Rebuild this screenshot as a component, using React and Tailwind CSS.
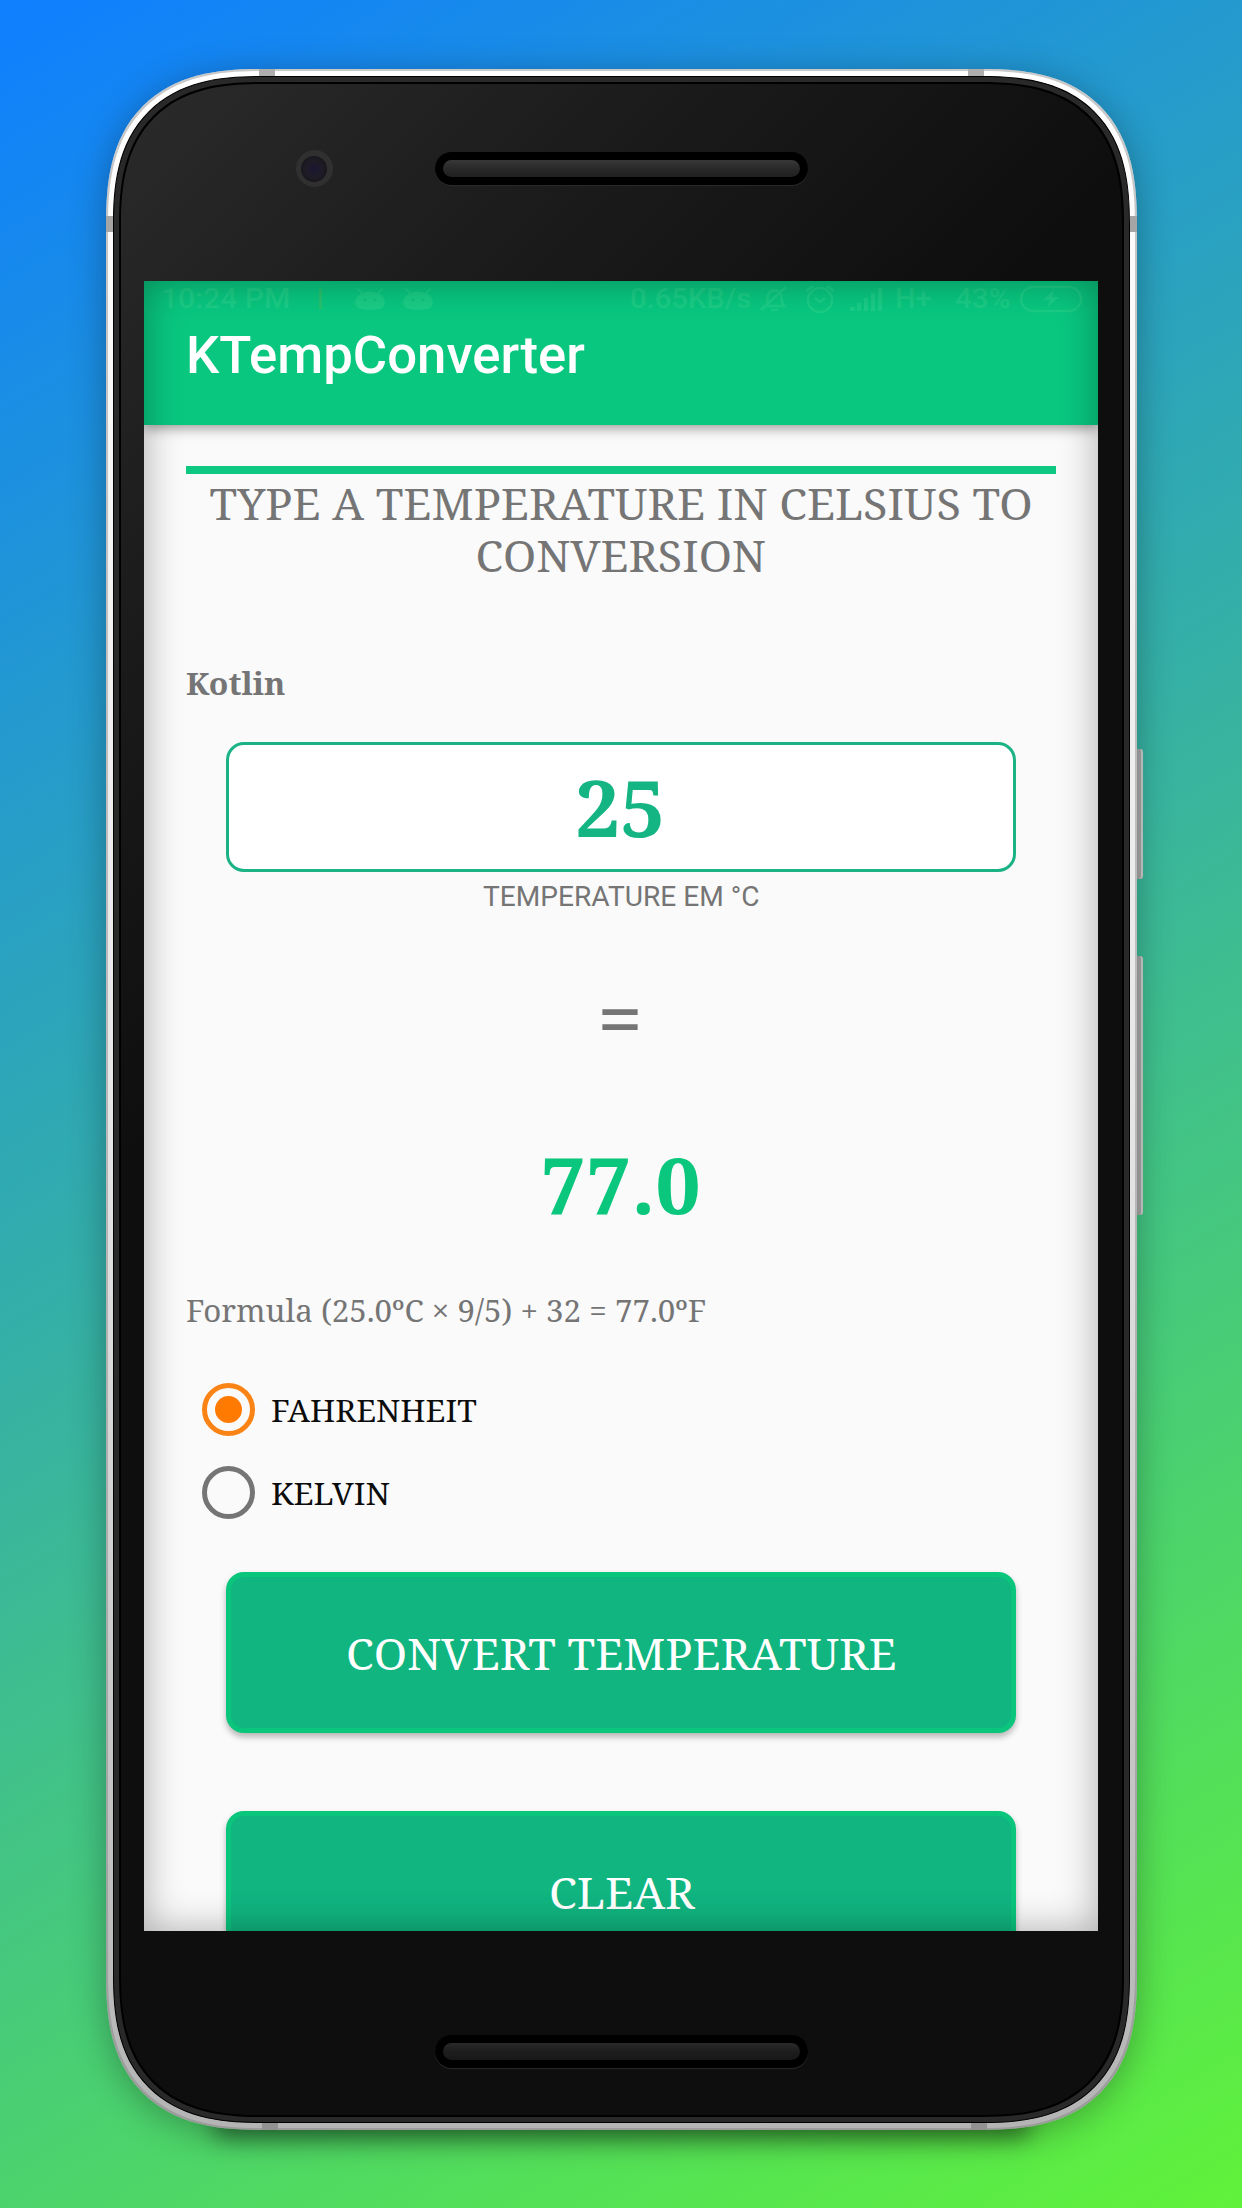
import { useLayoutEffect, useRef, useState } from "react";

const serif = "font-['Noto_Serif','DejaVu_Serif_Condensed','DejaVu_Serif',serif] [font-stretch:condensed]";
const sans = "font-[Roboto,sans-serif]";

/* One line of text squeezed or stretched to a given width. */
function FitText({ width, origin = "center", className = "", children }) {
  const ref = useRef(null);
  const [scale, setScale] = useState(1);
  useLayoutEffect(() => {
    const natural = ref.current.offsetWidth;
    if (natural) setScale(width / natural);
  }, [width, children]);
  return (
    <span
      ref={ref}
      className={`inline-block whitespace-nowrap ${className}`}
      style={{ transform: `scaleX(${scale})`, transformOrigin: origin }}
    >
      {children}
    </span>
  );
}

function Speaker({ light }) {
  return (
    <div className="flex h-[33px] w-[373px] items-center rounded-full bg-black px-2 shadow-[0_1px_1px_#2b2b2b]">
      <div
        className={
          light
            ? "h-[17px] w-full rounded-full bg-linear-to-b from-[#383838] via-[#292929] to-[#202020]"
            : "h-[17px] w-full rounded-full bg-linear-to-b from-[#2a2a2a] via-[#1d1d1d] to-[#181818]"
        }
      />
    </div>
  );
}

function Android() {
  return (
    <svg width="34" height="24" viewBox="0 0 34 24" fill="currentColor">
      <path d="M5 1l5 5c4-2 10-2 14 0l5-5 1 1-4 5c4 2 6 5 6 9 0 5-5 7-15 7S2 21 2 16c0-4 2-7 6-9L4 2z" />
      <circle cx="12" cy="13" r="1.5" fill="#10c37e" />
      <circle cx="22" cy="13" r="1.5" fill="#10c37e" />
    </svg>
  );
}

function StatusBar() {
  return (
    <div className={`flex h-[36px] items-center pl-[17px] pr-[15px] text-[28px] font-medium leading-[36px] text-[#1fcf88] opacity-80 ${sans}`}>
      <div className="flex w-[129px] justify-start"><FitText width={129} origin="left">10:24 PM</FitText></div>
      <div className="ml-[29px] h-[20px] w-[3px] bg-[#2fc26a]" />
      <div className="ml-[31px] flex gap-[14px]"><Android /><Android /></div>
      <div className="ml-auto flex items-center">
        <div className="w-[121px]"><FitText width={121} origin="left">0.65KB/s</FitText></div>
        <svg className="ml-[7px]" width="32" height="28" viewBox="0 0 32 28" fill="none" stroke="currentColor" strokeWidth="2.5">
          <path d="M5 21h23M8 21c2-3 1-8 2-11 2-6 11-6 13 0 1 4 0 8 3 11M13 25h7M3 25L28 2" />
        </svg>
        <svg className="ml-[14px]" width="32" height="30" viewBox="0 0 32 30" fill="none" stroke="currentColor" strokeWidth="2.5">
          <circle cx="16" cy="16" r="12" />
          <path d="M11 14l5 4 5-4M2 7l7-5M30 7l-7-5" />
        </svg>
        <svg className="ml-[14px]" width="34" height="24" viewBox="0 0 34 24" fill="currentColor">
          <path d="M0 20h5v4H0zM7 16h4v8H7zM14 11h4v13h-4zM21 6h4v18h-4zM28 1h4v23h-4z" />
        </svg>
        <div className="ml-[11px] w-[36px]"><FitText width={36} origin="left">H+</FitText></div>
        <div className="ml-[24px] w-[55px]"><FitText width={55} origin="left">43%</FitText></div>
        <svg className="ml-[9px]" width="64" height="28" viewBox="0 0 64 28" fill="none" stroke="currentColor" strokeWidth="2.5">
          <rect x="2" y="2" width="60" height="24" rx="12" />
          <path d="M35 5l-11 10h7l-3 8 12-11h-7z" fill="currentColor" stroke="none" />
        </svg>
      </div>
    </div>
  );
}

function Radio({ checked, label, width }) {
  return (
    <div className="flex h-[54px] items-center pl-4">
      <div
        className={`flex size-[53px] shrink-0 items-center justify-center rounded-full border-[5px] ${
          checked ? "border-[#f98415]" : "border-[#757575]"
        }`}
      >
        {checked && <div className="size-[27px] rounded-full bg-[#ff7a00]" />}
      </div>
      <div className={`ml-4 pt-1 text-[30px] leading-[50px] text-[#0c0c0c] ${serif}`}>
        <FitText width={width} origin="left">{label}</FitText>
      </div>
    </div>
  );
}

function ActionButton({ width, children }) {
  return (
    <button
      className={`mx-auto block h-[161px] w-[790px] shrink-0 rounded-[18px] border-[5px] border-[#0ac67d] bg-[#10b580] text-center text-[44px] leading-[152px] text-white shadow-[0_4px_6px_rgba(0,0,0,0.28)] ${serif}`}
    >
      <FitText width={width} className="pl-px">{children}</FitText>
    </button>
  );
}

function Screen() {
  return (
    <div className="relative flex h-[1650px] w-[954px] flex-col overflow-hidden bg-[#fafafa]">
      <header className="z-10 h-[144px] shrink-0 bg-[#09c77f] shadow-[0_3px_12px_rgba(0,0,0,0.4)]">
        <StatusBar />
        <div className={`pl-[42px] text-[51px] font-medium leading-[78px] text-white ${sans}`}>
          <FitText width={399} origin="left">KTempConverter</FitText>
        </div>
      </header>
      <main className="flex flex-col px-[42px] pt-[41px] text-[#757575]">
        <div className="h-2 shrink-0 bg-[#0cc880]" />
        <h1 className={`mt-1 flex flex-col items-center text-[44px] leading-[51.5px] ${serif}`}>
          <FitText width={824} className="pl-px">TYPE A TEMPERATURE IN CELSIUS TO</FitText>
          <FitText width={291}>CONVERSION</FitText>
        </h1>
        <div className={`mt-[82px] h-10 text-[31px] font-bold leading-10 ${serif}`}>
          <FitText width={99} origin="left">Kotlin</FitText>
        </div>
        <div className={`mx-auto mt-[39px] h-[130px] w-[790px] rounded-[18px] border-[3px] border-[#1bb385] bg-white pr-0.5 text-center text-[78px] font-bold leading-[124px] text-[#14b583] ${serif}`}>
          <FitText width={90}>25</FitText>
        </div>
        <div className={`mt-[9px] h-8 text-center text-[27.5px] leading-8 ${sans}`}>
          <FitText width={276}>TEMPERATURE EM °C</FitText>
        </div>
        <div className={`mt-[77px] h-[60px] pr-0.5 text-center text-[72px] leading-[60px] ${sans}`}>
          <FitText width={48}>=</FitText>
        </div>
        <div className={`mt-[89px] h-[90px] text-center text-[78px] font-bold leading-[90px] text-[#0bc77d] ${serif}`}>
          <FitText width={160}>77.0</FitText>
        </div>
        <div className={`mt-[61px] h-10 text-[31px] leading-10 ${serif}`}>
          <FitText width={520} origin="left">Formula (25.0ºC × 9/5) + 32 = 77.0ºF</FitText>
        </div>
        <div className="mt-[52px] flex flex-col gap-[29px]">
          <Radio checked label="FAHRENHEIT" width={206} />
          <Radio label="KELVIN" width={119} />
        </div>
        <div className="mt-[53px] flex flex-col gap-[78px]">
          <ActionButton width={551}>CONVERT TEMPERATURE</ActionButton>
          <ActionButton width={147}>CLEAR</ActionButton>
        </div>
      </main>
      <div className="pointer-events-none absolute inset-0 z-20 shadow-[inset_0_0_38px_rgba(0,0,0,0.32)]" />
    </div>
  );
}

export default function App() {
  return (
    <div className="flex h-[2208px] w-[1242px] justify-center overflow-hidden bg-[linear-gradient(149.5deg,#0f7fff_0%,#38b49f_50%,#60f23a_100%)] pt-[69px]">
      <div className="relative h-[2061px] w-[1031px]">
        <div className="absolute inset-x-[110px] bottom-[2px] h-[20px] rounded-full shadow-[0_6px_22px_4px_rgba(0,0,0,0.45)]" />
        <div className="absolute right-[-6px] top-[680px] h-[130px] w-3 rounded-[3px] border-r-2 border-[#cfcfcf] bg-[#a9a9a9]" />
        <div className="absolute right-[-6px] top-[887px] h-[259px] w-3 rounded-[3px] border-r-2 border-[#cfcfcf] bg-[#a9a9a9]" />
        <div className="relative h-full rounded-t-[127px] rounded-b-[132px] bg-linear-to-b from-white via-[#e6e6e6] to-[#b4b4b4] p-[7px] shadow-[inset_0_0_0_2px_rgba(120,120,120,0.4),0_6px_36px_rgba(0,0,0,0.3)] supports-[corner-shape:squircle]:rounded-[155px] supports-[corner-shape:squircle]:[corner-shape:superellipse(1.35)]">
          <div className="absolute left-[153px] top-0 h-[7px] w-4 bg-[#aeaeae]" />
          <div className="absolute right-[153px] top-0 h-[7px] w-4 bg-[#aeaeae]" />
          <div className="absolute bottom-0 left-[156px] h-[7px] w-4 bg-[#929292]" />
          <div className="absolute bottom-0 right-[150px] h-[7px] w-4 bg-[#929292]" />
          <div className="absolute left-0 top-[147px] h-4 w-[7px] bg-[#a5a5a5]" />
          <div className="absolute right-0 top-[147px] h-4 w-[7px] bg-[#a5a5a5]" />
          <div className="relative h-full rounded-t-[121px] rounded-b-[126px] border border-black bg-[#292929] p-[5px] supports-[corner-shape:squircle]:rounded-[149px] supports-[corner-shape:squircle]:[corner-shape:superellipse(1.35)]">
            <div className="flex h-full flex-col items-center rounded-t-[115px] rounded-b-[120px] border-2 border-black bg-[linear-gradient(135deg,#2b2b2b_0%,#1b1b1b_18%,#0e0e0e_36%,#0e0e0e_100%)] supports-[corner-shape:squircle]:rounded-[143px] supports-[corner-shape:squircle]:[corner-shape:superellipse(1.35)]">
              <div className="relative flex h-[197px] w-full shrink-0 justify-center pt-[68px]">
                <div className="absolute left-[175px] top-[66px] flex size-[37px] items-center justify-center rounded-full bg-[#303030]">
                  <div className="size-[26px] rounded-full bg-[radial-gradient(circle,#1b1730_10%,#1f1c26_45%,#100f13_100%)]" />
                </div>
                <Speaker light />
              </div>
              <Screen />
              <div className="mt-[104px]"><Speaker /></div>
            </div>
          </div>
        </div>
      </div>
    </div>
  );
}
